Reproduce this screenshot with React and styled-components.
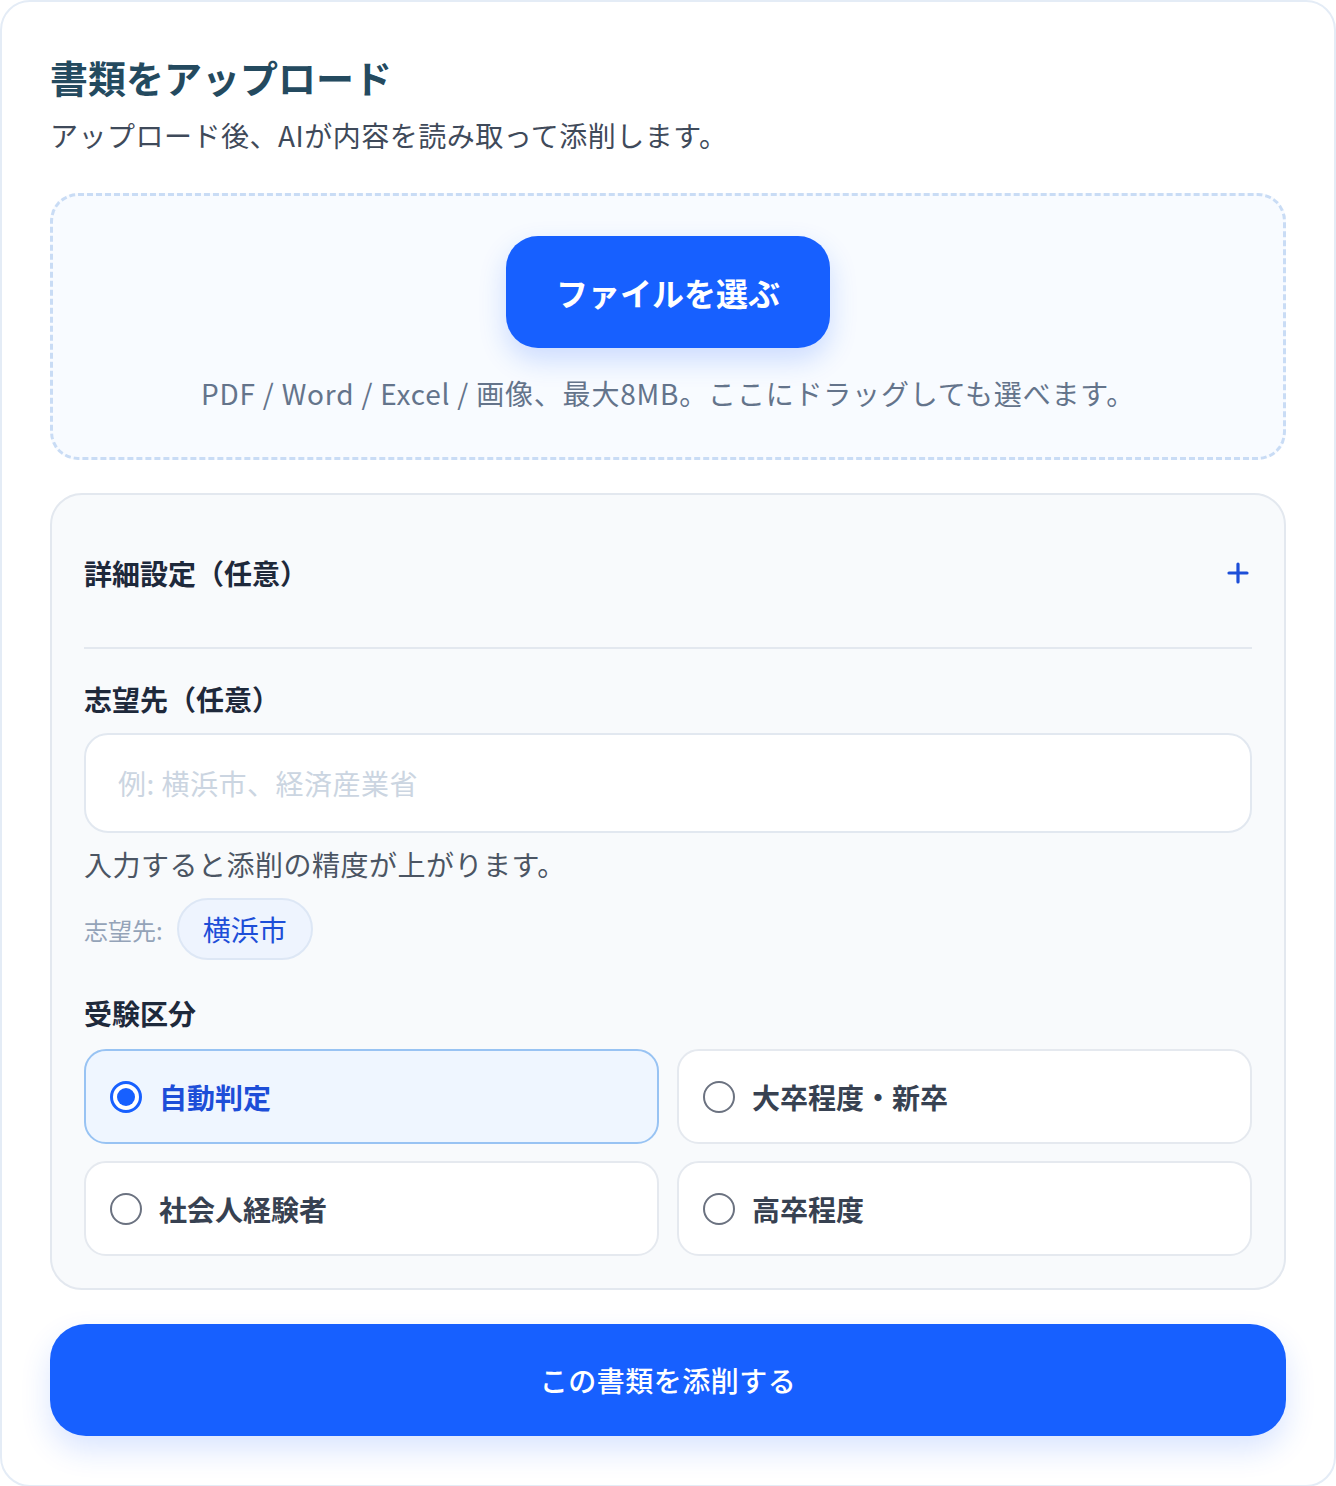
import React, { useState } from "react";
import styled, { createGlobalStyle } from "styled-components";

const GlobalStyle = createGlobalStyle`
    html, body {
        margin: 0;
        padding: 0;
        background: #ffffff;
    }
    body {
        font-family: "Noto Sans CJK JP", "Noto Sans", sans-serif;
        -webkit-font-smoothing: antialiased;
    }
    * {
        box-sizing: border-box;
    }
`;

const Card = styled.section`
    width: 1336px;
    border: 2px solid #e4ecf6;
    border-radius: 30px;
    background: #ffffff;
    padding: 50px 48px 49px;
    display: flex;
    flex-direction: column;
`;

const Title = styled.h1`
    margin: 0;
    font-size: 38px;
    line-height: 50px;
    font-weight: 700;
    color: #244a5f;
`;

const Lead = styled.p`
    margin: 12px 0 0;
    font-size: 28px;
    line-height: 42px;
    letter-spacing: 0.5px;
    color: #3f4a5a;
`;

const DropZone = styled.div`
    margin-top: 37px;
    border: 3px dashed #c9dcf5;
    border-radius: 28px;
    background: #f8fbff;
    padding: 40px 24px 43px;
    display: flex;
    flex-direction: column;
    align-items: center;
    gap: 24px;
`;

const PickButton = styled.button`
    width: 324px;
    height: 112px;
    border: none;
    border-radius: 32px;
    background: #1760ff;
    color: #ffffff;
    font-family: inherit;
    font-size: 32px;
    font-weight: 700;
    box-shadow: 0 12px 28px rgba(23, 96, 255, 0.2);
    cursor: pointer;
`;

const DropHint = styled.p`
    margin: 0;
    font-size: 28px;
    line-height: 42px;
    letter-spacing: 0.8px;
    color: #64748b;
`;

const Details = styled.div`
    margin-top: 33px;
    border: 2px solid #e3e8ef;
    border-radius: 32px;
    background: #f8fafc;
    padding: 0 32px 32px;
`;

const Summary = styled.div`
    display: flex;
    align-items: center;
    justify-content: space-between;
    padding: 57px 0 53px;
    border-bottom: 2px solid #e3e8ef;
    cursor: pointer;
`;

const SummaryText = styled.span`
    font-size: 28px;
    line-height: 42px;
    font-weight: 700;
    color: #1e293b;
`;

const PlusIcon = styled.svg`
    width: 22px;
    height: 22px;
    margin-right: 3px;
`;

const FieldLabel = styled.div`
    margin-top: ${(p) => p.$top || 0}px;
    font-size: 28px;
    line-height: 42px;
    font-weight: 700;
    color: #1e293b;
`;

const TextInput = styled.input`
    display: block;
    width: 100%;
    height: 100px;
    margin-top: 13px;
    border: 2px solid #e2e8f0;
    border-radius: 24px;
    background: #ffffff;
    padding: 0 32px;
    font-family: inherit;
    font-size: 28px;
    letter-spacing: 0.5px;
    color: #1e293b;
    outline: none;
    &::placeholder {
        color: #cbd5e1;
    }
`;

const HelpText = styled.p`
    margin: 10px 0 0;
    font-size: 28px;
    line-height: 42px;
    letter-spacing: 0.5px;
    color: #4b5563;
`;

const ChipRow = styled.div`
    margin-top: 13px;
    display: flex;
    align-items: center;
    gap: 14px;
`;

const ChipLabel = styled.span`
    font-size: 24px;
    color: #94a3b8;
`;

const Chip = styled.span`
    display: inline-flex;
    align-items: center;
    height: 62px;
    padding: 0 24px;
    border: 2px solid #dde7f5;
    border-radius: 31px;
    background: #eef4fe;
    font-size: 28px;
    color: #1d4ed8;
`;

const RadioGrid = styled.div`
    margin-top: 15px;
    display: grid;
    grid-template-columns: 1fr 1fr;
    column-gap: 18px;
    row-gap: 17px;
`;

const Option = styled.label`
    height: 95px;
    display: flex;
    align-items: center;
    gap: 17px;
    padding: 0 24px;
    border: 2px solid ${(p) => (p.$active ? "#98c3f3" : "#e5e9ef")};
    border-radius: 22px;
    background: ${(p) => (p.$active ? "#eff6ff" : "#ffffff")};
    cursor: pointer;
`;

const Dot = styled.span`
    width: 32px;
    height: 32px;
    flex: none;
    border-radius: 50%;
    border: ${(p) => (p.$active ? "3px solid #1760ff" : "2px solid #6b7280")};
    background: #ffffff;
    display: flex;
    align-items: center;
    justify-content: center;
    &::after {
        content: "";
        width: 18px;
        height: 18px;
        border-radius: 50%;
        background: #1760ff;
        display: ${(p) => (p.$active ? "block" : "none")};
    }
`;

const OptionText = styled.span`
    font-size: 28px;
    line-height: 42px;
    font-weight: 700;
    color: ${(p) => (p.$active ? "#1d4ed8" : "#374151")};
`;

const SubmitButton = styled.button`
    margin-top: 34px;
    width: 100%;
    height: 112px;
    border: none;
    border-radius: 36px;
    background: #1760ff;
    color: #ffffff;
    font-family: inherit;
    font-size: 28px;
    font-weight: 500;
    letter-spacing: 0.5px;
    box-shadow: 0 14px 30px rgba(23, 96, 255, 0.16);
    cursor: pointer;
`;

const OPTIONS = ["自動判定", "大卒程度・新卒", "社会人経験者", "高卒程度"];

export default function App() {
    const [category, setCategory] = useState("自動判定");

    return (
        <>
            <GlobalStyle />
            <Card>
                <Title>書類をアップロード</Title>
                <Lead>アップロード後、AIが内容を読み取って添削します。</Lead>

                <DropZone>
                    <PickButton type="button">ファイルを選ぶ</PickButton>
                    <DropHint>
                        PDF / Word / Excel / 画像、最大8MB。ここにドラッグしても選べます。
                    </DropHint>
                </DropZone>

                <Details>
                    <Summary>
                        <SummaryText>詳細設定（任意）</SummaryText>
                        <PlusIcon viewBox="0 0 22 22" fill="none">
                            <path
                                d="M11 2v18M2 11h18"
                                stroke="#1d4ed8"
                                strokeWidth="3.2"
                                strokeLinecap="round"
                            />
                        </PlusIcon>
                    </Summary>

                    <FieldLabel $top={29}>志望先（任意）</FieldLabel>
                    <TextInput placeholder="例: 横浜市、経済産業省" />
                    <HelpText>入力すると添削の精度が上がります。</HelpText>
                    <ChipRow>
                        <ChipLabel>志望先:</ChipLabel>
                        <Chip>横浜市</Chip>
                    </ChipRow>

                    <FieldLabel $top={32}>受験区分</FieldLabel>
                    <RadioGrid>
                        {OPTIONS.map((o) => (
                            <Option
                                key={o}
                                $active={category === o}
                                onClick={() => setCategory(o)}
                            >
                                <Dot $active={category === o} />
                                <OptionText $active={category === o}>{o}</OptionText>
                            </Option>
                        ))}
                    </RadioGrid>
                </Details>

                <SubmitButton type="button">この書類を添削する</SubmitButton>
            </Card>
        </>
    );
}
